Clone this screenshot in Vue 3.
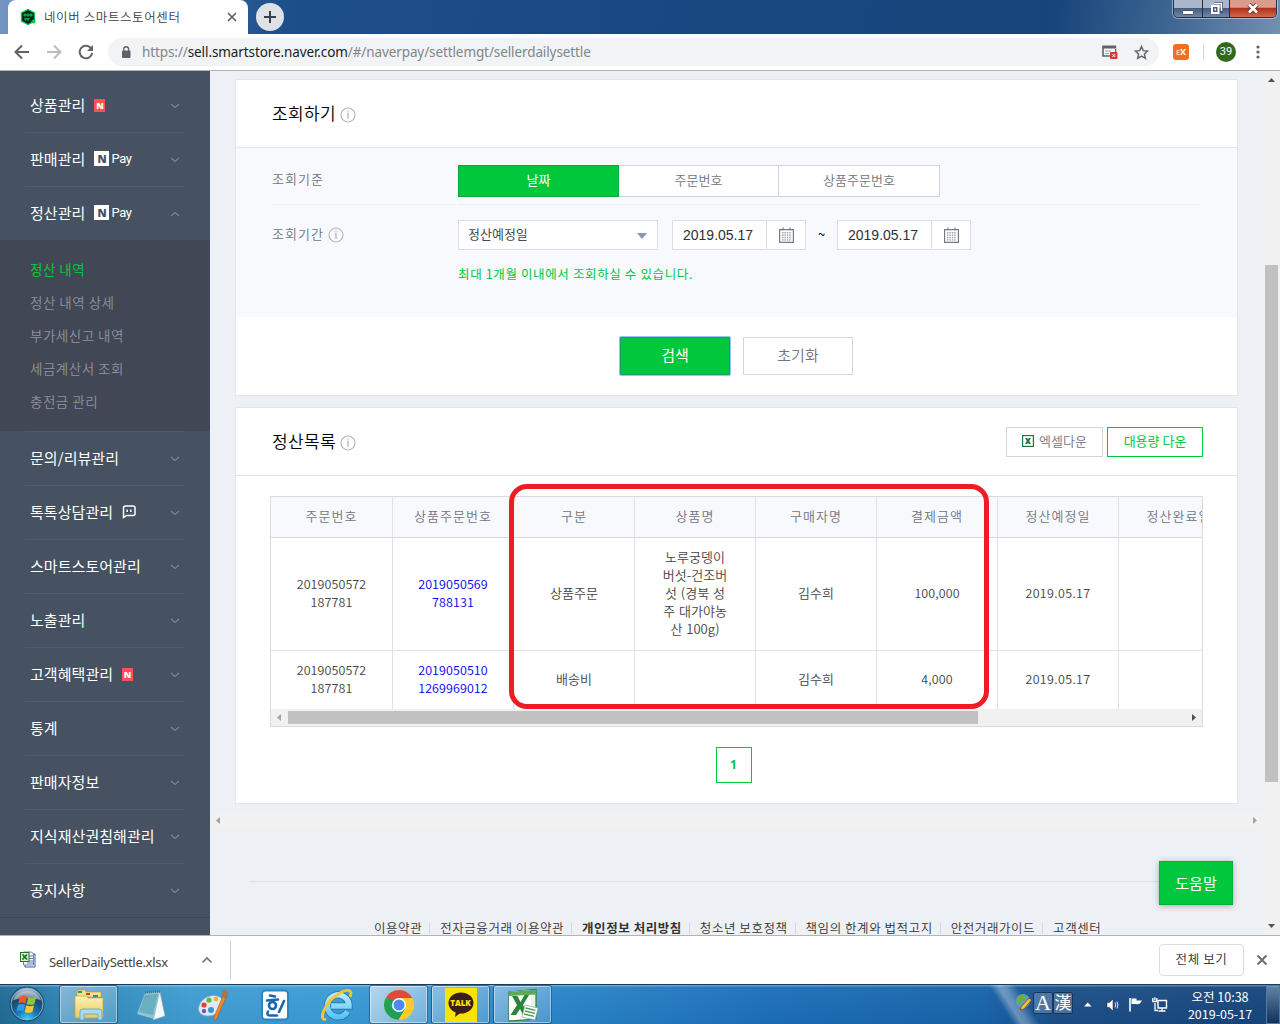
<script setup>
const menuTop = [
  { label: '상품관리', badge: 'new' },
  { label: '판매관리', badge: 'pay' },
  { label: '정산관리', badge: 'pay', open: true },
]
const subMenu = ['정산 내역', '정산 내역 상세', '부가세신고 내역', '세금계산서 조회', '충전금 관리']
const menuBottom = [
  { label: '문의/리뷰관리' },
  { label: '톡톡상담관리', badge: 'talk' },
  { label: '스마트스토어관리' },
  { label: '노출관리' },
  { label: '고객혜택관리', badge: 'new' },
  { label: '통계' },
  { label: '판매자정보' },
  { label: '지식재산권침해관리' },
  { label: '공지사항' },
]
const groups = [
  { id: 'top', items: menuTop },
  { id: 'bottom', items: menuBottom },
]
const columns = ['주문번호', '상품주문번호', '구분', '상품명', '구매자명', '결제금액', '정산예정일', '정산완료일']
const rows = [
  [['2019050572', '187781'], ['2019050569', '788131'], ['상품주문'], ['노루궁뎅이', '버섯-건조버', '섯 (경북 성', '주 대가야농', '산 100g)'], ['김수희'], ['100,000'], ['2019.05.17'], []],
  [['2019050572', '187781'], ['2019050510', '1269969012'], ['배송비'], [], ['김수희'], ['4,000'], ['2019.05.17'], []],
]
const footerLinks = ['이용약관', '전자금융거래 이용약관', '개인정보 처리방침', '청소년 보호정책', '책임의 한계와 법적고지', '안전거래가이드', '고객센터']
const dots = [0, 1, 2, 3, 4, 5, 6, 7, 8, 9, 10, 11, 12, 13, 14, 15]
</script>

<template>
  <div class="screen">
    <header class="tabstrip">
      <div class="tab">
        <svg class="favicon" width="16" height="16" viewBox="0 0 16 16">
          <path d="M8 .5 14.500 4v8L8 15.500 1.500 12V4z" fill="#0b1f26" stroke="#06c540" stroke-width="1.300" />
          <path d="M4 5h2v2H4zM7 5h2v2H7zM10 5h2v2h-2zM4.500 9l1 2.500L7 9l1 2.500L9.500 9" fill="#0aa63c" stroke="#0aa63c" />
          <circle cx="13.500" cy="12.500" r="2" fill="#06c540" />
        </svg>
        <span class="tab-title">네이버 스마트스토어센터</span>
        <svg class="tab-x" width="10" height="10" viewBox="0 0 10 10"><path d="M1 1l8 8M9 1l-8 8" stroke="#5f6368" stroke-width="1.700" /></svg>
      </div>
      <div class="newtab">
        <svg width="14" height="14" viewBox="0 0 14 14"><path d="M7 1v12M1 7h12" stroke="#3c4043" stroke-width="2" /></svg>
      </div>
      <div class="winbtns">
        <div class="wb"><svg width="12" height="14" viewBox="0 0 12 14"><rect x=".5" y="8.500" width="11" height="4" rx="1" fill="#fff" stroke="#46536a" /></svg></div>
        <div class="wb mid"><svg width="13" height="13" viewBox="0 0 13 13"><path d="M4 1h8v8H9.500" fill="none" stroke="#3a4860" stroke-width="3" /><path d="M4 1.500h7.500V9" fill="none" stroke="#fff" stroke-width="1.500" /><rect x="2" y="4" width="6.500" height="7" fill="#4c5d7a" stroke="#fff" stroke-width="2" /><rect x="4.500" y="6.500" width="1.500" height="2" fill="#fff" /></svg></div>
        <div class="wb close"><svg width="12" height="11" viewBox="0 0 12 11"><path d="M2 1.500l8 8M10 1.500l-8 8" stroke="#5a3030" stroke-width="4.500" /><path d="M2 1.500l8 8M10 1.500l-8 8" stroke="#fff" stroke-width="2.800" /></svg></div>
      </div>
    </header>

    <div class="toolbar">
      <svg class="nav" width="16" height="16" viewBox="0 0 16 16"><path d="M15 8H2M8 1.500 1.500 8 8 14.500" fill="none" stroke="#5f6368" stroke-width="2" /></svg>
      <svg class="nav" width="16" height="16" viewBox="0 0 16 16"><path d="M1 8h13M8 1.500 14.500 8 8 14.500" fill="none" stroke="#bbbdc0" stroke-width="2" /></svg>
      <svg class="nav" width="16" height="16" viewBox="0 0 16 16"><path d="M13.300 4.600A6.300 6.300 0 1 0 14.200 9" fill="none" stroke="#5f6368" stroke-width="2" /><path d="M15 1v6H9z" fill="#5f6368" /></svg>
      <div class="omnibox">
        <svg width="10" height="13" viewBox="0 0 10 13"><rect x="1" y="4.500" width="8.500" height="7.500" rx="1" fill="#5f6368" /><path d="M2.700 5V3.200a2.400 2.400 0 0 1 4.900 0V5" fill="none" stroke="#5f6368" stroke-width="1.300" /></svg>
        <span class="url">https://<b>sell.smartstore.naver.com</b>/#/naverpay/settlemgt/sellerdailysettle</span>
        <svg class="popup" width="16" height="14" viewBox="0 0 16 14"><path d="M1 2.500V11h7" fill="none" stroke="#5f6368" stroke-width="1.600" /><path d="M.2.500h14v3H.2zM13 3v4h1.200V3z" fill="#5f6368" /><path d="M3 6h6M3 8.500h4" stroke="#aaa" /><rect x="8" y="7" width="7.500" height="7" rx="1" fill="#d93a30" /><path d="M10.300 9l3 3M13.300 9l-3 3" stroke="#fff" /></svg>
        <svg class="star" width="15" height="15" viewBox="0 0 15 15"><path d="M7.500 1.500l1.800 4.100 4.400.4-3.300 3 1 4.400-3.900-2.300-3.900 2.300 1-4.400-3.300-3 4.400-.4z" fill="none" stroke="#5f6368" stroke-width="1.400" /></svg>
      </div>
      <div class="ext"><i>E</i>X</div>
      <div class="tsep"></div>
      <div class="avatar">39</div>
      <svg class="kebab" width="4" height="14" viewBox="0 0 4 14"><circle cx="2" cy="2" r="1.600" fill="#5f6368" /><circle cx="2" cy="7" r="1.600" fill="#5f6368" /><circle cx="2" cy="12" r="1.600" fill="#5f6368" /></svg>
    </div>

    <div class="page">
      <nav class="sidebar">
        <template v-for="g in groups" :key="g.id">
          <div v-for="m in g.items" :key="m.label" class="mitem" :class="{ open: m.open }">
            <span class="mlabel">{{ m.label }}</span>
            <span v-if="m.badge === 'new'" class="bnew">N</span>
            <span v-if="m.badge === 'pay'" class="bpay"><em>N</em>Pay</span>
            <svg v-if="m.badge === 'talk'" class="btalk" width="14" height="14" viewBox="0 0 14 14"><path d="M1.500 12.500V3q0-2 2-2H11q2 0 2 2v5.500q0 2-2 2H4.500z" fill="none" stroke="#fff" stroke-width="1.500" /><path d="M5.200 4.500V7M8.800 4.500V7" stroke="#fff" stroke-width="1.500" /></svg>
            <svg class="chev" width="10" height="6" viewBox="0 0 10 6"><path :d="m.open ? 'M1 5l4-3.500L9 5' : 'M1 1l4 3.500L9 1'" fill="none" stroke="#7c8591" stroke-width="1.200" /></svg>
          </div>
          <div v-if="g.id === 'top'" class="submenu">
            <div v-for="(s, i) in subMenu" :key="s" class="sub" :class="{ on: i === 0 }">{{ s }}</div>
          </div>
        </template>
      </nav>

      <main class="main">
        <section class="card search-card">
          <div class="chead">
            <h2>조회하기</h2>
            <svg class="info" width="16" height="16" viewBox="0 0 16 16"><circle cx="8" cy="8" r="7" fill="none" stroke="#b4b7be" stroke-width="1.200" /><path d="M8 3.800v1.600M7 7h1v5" fill="none" stroke="#b4b7be" stroke-width="1.300" /></svg>
          </div>
          <div class="form">
            <div class="frow first">
              <div class="flabel">조회기준</div>
              <div class="fval">
                <div class="seg">
                  <span class="s on">날짜</span><span class="s">주문번호</span><span class="s last">상품주문번호</span>
                </div>
              </div>
            </div>
            <div class="frow">
              <div class="flabel"><span>조회기간</span>
                <svg class="info" width="16" height="16" viewBox="0 0 16 16"><circle cx="8" cy="8" r="7" fill="none" stroke="#b4b7be" stroke-width="1.200" /><path d="M8 3.800v1.600M7 7h1v5" fill="none" stroke="#b4b7be" stroke-width="1.300" /></svg>
              </div>
              <div class="fval">
                <div class="controls">
                  <div class="select">정산예정일<svg width="10" height="6" viewBox="0 0 10 6"><path d="M0 0h10L5 6z" fill="#8b97ac" /></svg></div>
                  <template v-for="n in 2" :key="n">
                    <div class="date">
                      <span>2019.05.17</span>
                      <div class="calbox">
                        <svg width="15" height="16" viewBox="0 0 15 16"><path d="M.6 2.600h13.800v12.800H.6zM4 .5v3M11 .5v3M7.500 2v1" fill="none" stroke="#757c85" stroke-width="1.200" /><rect v-for="d in dots" :key="d" :x="3 + (d % 4) * 2.400" :y="5 + Math.floor(d / 4) * 2.400" width="1.500" height="1.500" fill="#a4a8af" /></svg>
                      </div>
                    </div>
                    <span v-if="n === 1" class="tilde">~</span>
                  </template>
                </div>
                <p class="hint">최대 1개월 이내에서 조회하실 수 있습니다.</p>
              </div>
            </div>
          </div>
          <div class="actions">
            <div class="btn go">검색</div>
            <div class="btn">초기화</div>
          </div>
        </section>

        <section class="card list-card">
          <div class="chead">
            <h2>정산목록</h2>
            <svg class="info" width="16" height="16" viewBox="0 0 16 16"><circle cx="8" cy="8" r="7" fill="none" stroke="#b4b7be" stroke-width="1.200" /><path d="M8 3.800v1.600M7 7h1v5" fill="none" stroke="#b4b7be" stroke-width="1.300" /></svg>
            <div class="dl">
              <svg width="12" height="12" viewBox="0 0 12 12"><rect x=".6" y=".6" width="10.800" height="10.800" fill="#fff" stroke="#1d7a45" stroke-width="1.200" /><path d="M3 3h2.200L6 4.500 6.800 3H9L7.200 6 9 9H6.800L6 7.500 5.200 9H3l1.800-3z" fill="#1d7a45" /></svg>
              엑셀다운
            </div>
            <div class="dl green">대용량 다운</div>
          </div>
          <div class="tbl">
            <div class="tr th">
              <div v-for="c in columns" :key="c" class="td">{{ c }}</div>
            </div>
            <div v-for="(r, ri) in rows" :key="ri" class="tr" :class="'r' + ri">
              <div v-for="(c, ci) in r" :key="ci" class="td" :class="{ link: ci === 1, num: ci < 2 || ci === 5, day: ci === 6 }">
                <div v-for="l in c" :key="l">{{ l }}</div>
              </div>
            </div>
            <div class="hs">
              <svg width="17" height="17" viewBox="0 0 17 17"><path d="M10 5v7L6 8.500z" fill="#a3a3a3" /></svg>
              <div class="hthumb"></div>
              <svg class="end" width="17" height="17" viewBox="0 0 17 17"><path d="M7 5v7l4-3.500z" fill="#505050" /></svg>
            </div>
          </div>
          <div class="pager"><span>1</span></div>
        </section>

        <div class="mainhs">
          <svg width="17" height="17" viewBox="0 0 17 17"><path d="M10 5v7L6 8.500z" fill="#a3a3a3" /></svg>
          <svg width="17" height="17" viewBox="0 0 17 17"><path d="M7 5v7l4-3.500z" fill="#a3a3a3" /></svg>
        </div>
        <footer class="foot">
          <a v-for="(f, i) in footerLinks" :key="f" :class="{ bold: i === 2 }">{{ f }}</a>
        </footer>
        <div class="marker"></div>
        <div class="help">도움말</div>
      </main>

      <div class="vs">
        <svg width="17" height="17" viewBox="0 0 17 17"><path d="M5 11h7L8.500 7z" fill="#505050" /></svg>
        <div class="vthumb"></div>
        <svg class="down" width="17" height="17" viewBox="0 0 17 17"><path d="M5 6h7l-3.500 4z" fill="#505050" /></svg>
      </div>
    </div>

    <div class="shelf">
      <svg class="xl" width="17" height="18" viewBox="0 0 17 18">
        <path d="M5 3h10v13H5z" fill="#fff" stroke="#3c5aa0" /><path d="M3.500 1h8l2 2v11h-10z" fill="#f4f7fd" stroke="#6c86ba" />
        <path d="M9 5h4M9 7.500h4M7 10h6M7 12h6" stroke="#5e7dbb" /><rect x=".5" y="1.500" width="8.500" height="9" fill="#d8f0d0" stroke="#237a2b" /><path d="M2.500 3.500l4.500 5M7 3.500l-4.500 5" stroke="#14771f" stroke-width="1.700" />
      </svg>
      <span class="fname">SellerDailySettle.xlsx</span>
      <svg class="up" width="12" height="8" viewBox="0 0 12 8"><path d="M1.500 6.500 6 2l4.500 4.500" fill="none" stroke="#777" stroke-width="1.700" /></svg>
      <div class="ssep"></div>
      <div class="showall">전체 보기</div>
      <svg class="sx" width="12" height="12" viewBox="0 0 12 12"><path d="M1.500 1.500l9 9M10.500 1.500l-9 9" stroke="#6a6e73" stroke-width="2" /></svg>
    </div>

    <div class="taskbar">
      <svg class="start" width="36" height="38" viewBox="0 0 36 38">
        <defs>
          <radialGradient id="orb" cx=".5" cy="1" r=".95"><stop offset="0" stop-color="#3fe0ff" /><stop offset=".35" stop-color="#1a76b4" /><stop offset=".75" stop-color="#1d4669" /><stop offset="1" stop-color="#a9bccb" /></radialGradient>
          <linearGradient id="fold" x1="0" y1="0" x2="0" y2="1"><stop offset="0" stop-color="#fdf3b8" /><stop offset="1" stop-color="#ecc95d" /></linearGradient>
          <linearGradient id="ieb" gradientUnits="userSpaceOnUse" x1="0" y1="4" x2="0" y2="32"><stop offset="0" stop-color="#c4f1ff" /><stop offset="1" stop-color="#4fc0f4" /></linearGradient>
        </defs>
        <circle cx="18" cy="19" r="17.500" fill="#123c5c" opacity=".7" />
        <circle cx="18" cy="19" r="16" fill="url(#orb)" stroke="#7fb4d3" />
        <path d="M4 15a15 14 0 0 1 28 0q-14-4-28 0z" fill="#fff" opacity=".4" />
        <path d="M11 11.500q4-2 7 0l-1.600 7q-3.500-1.800-7 0z" fill="#ee5a24" /><path d="M19.200 12q4 2 8 0l-1.800 7q-4 1.700-7.800 0z" fill="#8cc63f" />
        <path d="M9 19.800q4-1.800 7 0l-1.600 6.700q-3.500-1.800-7 0z" fill="#2e9be6" /><path d="M17.200 20.300q4 1.900 7.800 0L23.400 27q-4 1.700-7.800 0z" fill="#fdc82f" />
      </svg>
      <div class="tb active explorer">
        <svg width="34" height="32" viewBox="0 0 34 32"><path d="M5 3q0-2 2-2h6l1 2h15v5H5z" fill="#f7e38c" stroke="#b99a3d" stroke-width=".6" /><path d="M6 2h4v2H6z" fill="#20a040" /><path d="M14 4h4v2h-4z" fill="#d33" /><path d="M21 6h5v2h-5z" fill="#28c" /><path d="M3 7h11l2 2h15v19q0 1-1 1H4q-1 0-1-1z" fill="url(#fold)" stroke="#c4a148" stroke-width=".7" /><path d="M8 31V23q0-3 3-3h16q3 0 3 3v8h-4v-6H12v6z" fill="#a9dcf2" stroke="#619fbe" stroke-width=".8" /></svg>
      </div>
      <div class="tb"><svg width="32" height="32" viewBox="0 0 32 32"><path d="M22 4l3-1 5 24-12 4z" fill="#f3f7f8" stroke="#8fa7ad" stroke-width=".6" /><path d="M10 4l15-1-6 27L2 25z" fill="#8ec6d4" /><path d="M10 6l13-1-5 21-14-3z" fill="#4597ab" opacity=".5" /><path d="M10 3.500l15.500-1" stroke="#587078" stroke-width="2.400" stroke-dasharray="1 1" /></svg></div>
      <div class="tb"><svg width="34" height="32" viewBox="0 0 34 32"><path d="M3 17C6 7 20 3 26 10c2 4-4 5-3 9 1 5-5 8-11 8C5 27 1 23 3 17z" fill="#dcebf7" stroke="#7fa3c4" stroke-width=".8" /><circle cx="8" cy="16" r="2.600" fill="#e0452f" /><circle cx="13" cy="11" r="2.600" fill="#6ab43c" /><circle cx="20" cy="10" r="2.400" fill="#f2b22c" /><circle cx="8" cy="22" r="2.200" fill="#8253b2" /><circle cx="15" cy="21" r="3" fill="#3895cf" /><path d="M27 7l3 2-10 22q-3 1-2-3z" fill="#ee8a2f" stroke="#a9561c" stroke-width=".6" /><path d="M26 6q0-6 4-5 3 1 2 7l-3 2z" fill="#a8744a" /></svg></div>
      <div class="tb"><svg width="32" height="32" viewBox="0 0 32 32"><rect x="3" y="1.500" width="26" height="29" rx="3.500" fill="#fff" stroke="#2d84cb" stroke-width="2" /><path d="M11 6.500l5 1M8 11.500l11-1" stroke="#1766b3" stroke-width="2.600" stroke-linecap="round" /><circle cx="13.500" cy="16.500" r="3.500" fill="none" stroke="#1766b3" stroke-width="2.600" /><path d="M9 22.500q-2 4 2 4h7M25 12l-5 11" stroke="#1766b3" stroke-width="2.600" stroke-linecap="round" fill="none" /></svg></div>
      <div class="tb"><svg width="34" height="34" viewBox="0 0 34 34"><path d="M27.500 23.500A10.800 11 0 1 1 29 18H11" fill="none" stroke="#1c6fae" stroke-width="7" /><path d="M27.500 23.500A10.800 11 0 1 1 29 18H11" fill="none" stroke="url(#ieb)" stroke-width="5.500" /><path d="M6 31C-2 34 4 15 17 7 25 1 34 0 30 9" fill="none" stroke="#f4c72c" stroke-width="2.800" /></svg></div>
      <div class="tb active"><svg width="32" height="32" viewBox="0 0 32 32"><circle cx="16" cy="16" r="15" fill="#fccb2e" /><path d="M16 16 3 8.500A15 15 0 0 1 29 8.500L29 9H16z" fill="#dd4b3e" /><path d="M3 8.500A15 15 0 0 0 15.500 31L22.500 19.500 16 16 9.700 19.500z" fill="#1fa05a" /><path d="M3 8.500 9.700 19.500 12 12z" fill="#1fa05a" /><path d="M16 9h13.200a15 15 0 0 1-13.700 22L22.500 19.500z" fill="#fccb2e" /><circle cx="16" cy="16" r="7" fill="#fff" /><circle cx="16" cy="16" r="5.500" fill="#4a8af4" /></svg></div>
      <div class="tb run"><div class="talk"><svg width="26" height="27" viewBox="0 0 26 27"><ellipse cx="13" cy="12" rx="12.500" ry="10.500" fill="#3a1d1d" /><path d="M8 20l-1 6 6-4.500z" fill="#3a1d1d" /></svg><span>TALK</span></div></div>
      <div class="tb run"><svg width="32" height="34" viewBox="0 0 32 34"><path d="M2 4 29 1.500V31L2 33z" fill="#e9f4e6" stroke="#2d7d38" stroke-width="1.200" /><path d="M2 4 24 2v28L2 32z" fill="#fff" /><path d="M2 4l27-2.500v5L2 8z" fill="#5daa55" /><path d="M5 8h5.500l3 6 4-7h4.500l-6 10 6 10h-6l-3-6-4 6H3.500L10 17z" fill="#28853a" /><path d="M18 17l13 3-3 12-13-3z" fill="#fff" stroke="#86aa80" stroke-width=".7" /><path d="M18.500 20l10 2.300M18 23l10 2.300M17 26l10 2.300" stroke="#4c9a51" stroke-width="1.300" /></svg></div>
      <div class="tray">
        <svg class="globe" width="17" height="18" viewBox="0 0 17 18"><circle cx="8" cy="8" r="7" fill="#5c9fc4" /><path d="M2 5q4-5 7-3l2 3-4 4-5 1zM10 9l4-3v5l-4 3z" fill="#6fae3c" /><path d="M6 14 14 5l2.500 2L9 16l-3.500 1z" fill="#f0c23c" stroke="#7a4a1c" stroke-width=".8" /></svg>
        <span class="ime a">A</span><span class="ime">漢</span>
        <svg class="t1" width="8" height="5" viewBox="0 0 8 5"><path d="M0 4.500h7.500L3.800.5z" fill="#fff" /></svg>
        <svg class="t2" width="13" height="14" viewBox="0 0 13 14"><path d="M1 4.500h2.500L7 1v12L3.500 9.500H1z" fill="#fff" stroke="#223" stroke-width=".5" /><path d="M9 4.500q1.500 2.500 0 5M11 3.500q2 3.500 0 7" fill="none" stroke="#dfe8f2" /></svg>
        <svg class="t3" width="16" height="15" viewBox="0 0 16 15"><path d="M2 1v13.500" stroke="#fff" stroke-width="1.600" /><path d="M3.500 1.500h5v2h5.500l-2 3-3.500 1v-.5h-5z" fill="#fff" /></svg>
        <svg class="t4" width="16" height="15" viewBox="0 0 16 15"><path d="M6 3.500h8.500v7.500H6z" fill="#1d4a80" stroke="#fff" stroke-width="1.400" /><path d="M10 11v2.500M6.500 14h7M3 6v7.500h3" stroke="#fff" stroke-width="1.300" fill="none" /><path d="M.8 1v3.500h4V1M2.800.2v3" stroke="#fff" stroke-width="1.300" fill="none" /></svg>
        <div class="clock"><div>오전 10:38</div><div>2019-05-17</div></div>
        <div class="peek"></div>
      </div>
    </div>
  </div>
</template>

<style>
body { margin: 0; overflow: hidden; }
</style>

<style scoped>
* { box-sizing: border-box; }
svg { flex: none; display: block; }
.screen { width: 1280px; height: 1024px; display: flex; flex-direction: column; overflow: hidden; font-family: "Noto Sans CJK KR", "Noto Sans", sans-serif; font-size: 13px; background: #fff; }

.tabstrip { height: 34px; flex: none; display: flex; align-items: flex-start; padding-left: 8px; background: linear-gradient(100deg, #7596c2 0, #1d4f8b 22%, #194882 50%, #17447a 82%, #3d6591 91%, #7390b0 100%); }
.tab { width: 240px; height: 34px; background: #fff; border-radius: 8px 8px 0 0; display: flex; align-items: center; padding: 0 11px 0 12px; }
.tab-title { margin-left: 8px; padding-bottom: 2px; font-size: 12.500px; letter-spacing: .6px; color: #3c4043; font-weight: 350; flex: 1; white-space: nowrap; }
.newtab { width: 28px; height: 28px; margin: 3px 0 0 8px; border-radius: 50%; background: #dee1e6; display: flex; align-items: center; justify-content: center; }
.winbtns { margin-left: auto; margin-right: 3px; display: flex; width: 104px; height: 18px; border: 1px solid #20314a; border-top: 0; border-radius: 0 0 5px 5px; overflow: hidden; box-shadow: 0 0 0 1px rgba(255,255,255,.45); }
.wb { width: 29px; display: flex; align-items: center; justify-content: center; background: linear-gradient(#a9b7c9 0 45%, #465e80 50%, #6f88a8); border-right: 1px solid #20314a; }
.wb.mid { width: 27px; }
.wb.close { flex: 1; border: 0; background: linear-gradient(#d99c8d 0 42%, #b5301b 50%, #d06a4b); }

.toolbar { height: 37px; flex: none; display: flex; align-items: center; padding: 0 20px 0 14px; border-bottom: 1px solid #b3b3b5; background: #fff; }
.nav { margin-right: 16px; }
.omnibox { width: 1051px; height: 28px; margin-left: -2px; border-radius: 14px; background: #f1f3f4; display: flex; align-items: center; padding: 0 10px 0 13px; }
.url { margin-left: 11px; flex: 1; font-family: "Noto Sans", "Open Sans", sans-serif; font-size: 13.500px; line-height: 20px; color: #80868b; letter-spacing: -.1px; white-space: nowrap; }
.url b { font-weight: 400; color: #202124; }
.popup { margin-right: 16px; }
.ext { width: 16px; height: 16px; margin-left: 14px; border-radius: 3px; background: #f26f21; color: #fff; font: bold 9px/16px "Open Sans", sans-serif; text-align: center; }
.ext i { font-style: normal; font-size: 7px; opacity: .7; }
.tsep { width: 1px; height: 16px; background: #d0d2d5; margin: 0 12px 0 14px; }
.avatar { width: 20px; height: 20px; border-radius: 50%; background: #33691e; color: #fff; font: 11px/20px Roboto, sans-serif; text-align: center; }
.kebab { margin-left: auto; }

.page { height: 864px; flex: none; display: flex; background: #edf0f5; overflow: hidden; }
.sidebar { width: 210px; flex: none; background: #465161; padding-top: 8px; display: flex; flex-direction: column; }
.mitem { height: 54px; flex: none; margin: 0 25px; padding: 0 5px; border-bottom: 1px solid #515c6d; display: flex; align-items: center; color: #fff; }
.mitem:last-child { margin: 0; padding: 0 30px; border-color: #3d4756; }
.mitem.open { border: 0; height: 53px; }
.mlabel { font-size: 15px; line-height: 20px; padding-bottom: 2px; letter-spacing: .05px; white-space: nowrap; }
.bnew { width: 11px; height: 13px; margin-left: 9px; background: #ff5058; color: #fff; font: 800 9px/13px "Open Sans", sans-serif; text-align: center; }
.bpay { display: flex; align-items: center; margin-left: 9px; padding-bottom: 2px; font: 13px/15px Roboto, sans-serif; letter-spacing: -.35px; }
.bpay em { width: 15px; height: 15px; margin-right: 2px; background: #fff; color: #465161; font: 900 11px/15px "Open Sans", sans-serif; text-align: center; }
.btalk { margin-left: 9px; margin-bottom: 2px; }
.chev { margin-left: auto; }
.submenu { height: 191px; flex: none; background: #424755; padding-top: 13px; }
.submenu + .mitem { height: 55px; border-top: 1px solid #515c6d; }
.sub { height: 33px; padding-left: 30px; line-height: 32px; font-size: 13.500px; letter-spacing: .5px; color: #8d949e; font-weight: 350; white-space: nowrap; }
.sub.on { color: #00c73c; font-weight: 400; }

.main { position: relative; width: 1053px; flex: none; padding: 8px 0 0 25px; display: flex; flex-direction: column; }
.card { width: 1003px; flex: none; background: #fff; border: 1px solid #e3e5ec; }
.chead { height: 68px; display: flex; align-items: center; padding: 0 34px 0 36px; border-bottom: 1px solid #e3e5ec; }
h2 { margin: 0; padding-bottom: 2px; font-size: 17px; line-height: 24px; font-weight: 350; letter-spacing: .36px; color: #000; }
.chead .info { margin: 3px 0 0 4px; }
.search-card { height: 317px; }
.form { height: 169px; background: #f8f9fd; padding: 17px 36px 0; }
.frow { display: flex; gap: 2px; }
.flabel { width: 184px; height: 30px; display: flex; align-items: center; font-weight: 350; letter-spacing: 1px; color: #70757f; }
.flabel span { padding-bottom: 3px; }
.flabel .info { margin: -1px 0 0 4px; }
.fval { flex: 1; }
.first > div { height: 40px; border-bottom: 1px solid #eceef3; }
.first .flabel { padding-bottom: 12px; }
.frow + .frow { padding-top: 15px; }
.seg { width: 482px; height: 32px; display: flex; }
.s { width: 160px; border: 1px solid #d2d4dc; border-width: 1px 1px 1px 0; background: #fff; text-align: center; line-height: 27px; color: #70757f; font-weight: 350; }
.s.on { width: 161px; border: 1px solid #06a937; background: #00c73c; color: #fff; font-weight: 400; }
.s.last { width: 161px; }
.controls { display: flex; align-items: center; }
.select { width: 200px; height: 30px; border: 1px solid #dbdde2; background: #fff; display: flex; align-items: center; justify-content: space-between; padding: 0 10px 0 9px; margin-right: 14px; color: #444952; line-height: 24px; padding-bottom: 2px; }
.select svg { margin-top: 3px; }
.date { width: 134px; height: 30px; border: 1px solid #dbdde2; background: #fff; display: flex; font: 14px/29px "Liberation Sans", Arial, sans-serif; color: #303038; }
.date > span { width: 93px; padding-left: 10px; }
.calbox { flex: 1; border-left: 1px solid #dbdde2; display: flex; align-items: center; justify-content: center; }
.tilde { width: 31px; text-align: center; line-height: 26px; padding-bottom: 3px; color: #000; }
.hint { margin: 15px 0 0; line-height: 18px; font-size: 12.500px; color: #00c73c; letter-spacing: .63px; white-space: nowrap; }
.actions { display: flex; justify-content: center; gap: 13px; padding-top: 20px; }
.btn { width: 110px; height: 38px; border: 1px solid #d2d4dc; background: #fff; color: #70757f; font-size: 15px; line-height: 34px; text-align: center; font-weight: 350; }
.btn.go { border-color: #159f6c; background: #00c73c; color: #fff; box-shadow: 0 0 0 1px #9cc0f4; border-radius: 1px; font-weight: 400; }

.list-card { height: 397px; margin-top: 11px; }
.dl { width: 97px; height: 30px; border: 1px solid #d2d4dc; display: flex; align-items: center; justify-content: center; gap: 5px; color: #70757f; font-weight: 350; line-height: 26px; padding-bottom: 2px; }
.dl svg { margin-top: 1px; }
.info + .dl { margin-left: auto; margin-right: 4px; }
.dl.green { width: 96px; border-color: #00c73c; color: #00c73c; font-weight: 400; }
.tbl { width: 933px; height: 231px; margin: 20px 0 0 34px; border: 1px solid #d9dbe2; overflow: hidden; display: flex; flex-direction: column; }
.tr { display: flex; flex: none; width: 970px; border-bottom: 1px solid #e1e3e9; line-height: 18px; color: #444; }
.td { width: 121px; flex: none; border-right: 1px solid #dfe1e7; padding-bottom: 2px; display: flex; flex-direction: column; align-items: center; justify-content: center; white-space: nowrap; font-weight: 350; word-spacing: 1px; }
.td:first-child { width: 122px; }
.th { height: 41px; background: #f8f9fd; color: #70757f; letter-spacing: 1px; border-color: #d9dbe2; }
.r0 { height: 113px; }
.r1 { height: 58px; border: 0; }
.num { font-size: 12.500px; letter-spacing: .1px; }
.day { font-size: 12.500px; letter-spacing: .35px; }
.link { color: #00e; }
.hs { height: 17px; background: #f1f1f1; display: flex; align-items: center; }
.hthumb { width: 690px; height: 13px; background: #c1c1c1; }
.end { margin-left: auto; }
.pager { display: flex; justify-content: center; padding-top: 20px; }
.pager span { width: 36px; height: 36px; margin-right: 6px; border: 1px solid #00c73c; color: #00c73c; font: bold 12px/34px "Open Sans", sans-serif; text-align: center; }

.mainhs { height: 17px; flex: none; margin: 8px 0 0 -25px; background: #f1f1f1; display: flex; justify-content: space-between; }
.foot { margin: 52px 29px 0 14px; flex: none; border-top: 1px solid #dcdfe3; padding: 37px 0 0 125px; height: 60px; display: flex; }
.foot a { font-size: 12.500px; line-height: 18px; letter-spacing: .55px; color: #333; font-weight: 350; white-space: nowrap; padding-right: 8px; }
.foot a + a { padding-left: 10px; }
.foot a:not(:last-child) { background: linear-gradient(#d5d8dd, #d5d8dd) right 4px / 1px 11px no-repeat; }
.foot .bold { font-weight: 700; }
.marker { position: absolute; left: 299px; top: 413px; width: 480px; height: 225px; border: 5px solid #ee1c24; border-radius: 18px; }
.help { position: absolute; left: 949px; top: 790px; width: 74px; height: 44px; background: #00c73c; border: 1px solid #06b038; box-shadow: 0 1px 6px rgba(0,0,0,.3); color: #fff; font-size: 15px; line-height: 41px; text-align: center; }

.vs { width: 17px; background: #f1f1f1; display: flex; flex-direction: column; }
.vthumb { height: 517px; width: 13px; margin: 177px 0 0 2px; background: #c1c1c1; }
.down { margin-top: auto; }

.shelf { height: 49px; flex: none; border-top: 1px solid #b3b3b5; background: #fff; display: flex; align-items: center; padding: 0 12px 0 20px; }
.fname { width: 152px; margin-left: 12px; padding-top: 4px; font-family: "Noto Sans", sans-serif; font-size: 13px; letter-spacing: -.3px; color: #444; white-space: nowrap; }
.ssep { width: 1px; height: 38px; margin-left: 17px; background: #ccc; }
.showall { width: 85px; height: 32px; margin-left: auto; margin-right: 12px; border: 1px solid #dadce0; border-radius: 4px; text-align: center; line-height: 27px; font-size: 12.500px; letter-spacing: .6px; color: #3c4043; }

.taskbar { height: 40px; flex: none; display: flex; align-items: stretch; border-top: 1px solid #1a3c5c; background: linear-gradient(rgba(255,255,255,.3) 0 1px, rgba(255,255,255,.04) 2px, rgba(0,0,0,.03)), linear-gradient(58deg, transparent 859px, rgba(255,255,255,.35) 867px, rgba(255,255,255,.3) 872px, transparent 882px), linear-gradient(90deg, #216a93 0, #2c84b5 60px, #3f9dd0 190px, #3b9cd6 330px, #2a86ca 550px, #1c6fb9 760px, #1764ab 980px, #1b4f88 1060px, #17457b 1280px); }
.start { margin: 0 14px 0 9px; }
.tb { width: 60px; margin-right: 2px; display: flex; align-items: center; justify-content: center; }
.tb.active, .tb.run { height: 39px; width: 59px; margin-right: 3px; border: 1px solid rgba(20,50,80,.65); border-radius: 3px; box-shadow: inset 0 0 0 1px rgba(255,255,255,.45); background: linear-gradient(135deg, rgba(255,255,255,.6), rgba(255,255,255,.3)); }
.tb.explorer, .tb.run { background: linear-gradient(135deg, rgba(255,255,255,.4), rgba(255,255,255,.15)); }
.talk { position: relative; width: 32px; height: 34px; background: #fbe300; display: flex; align-items: center; justify-content: center; }
.talk span { position: absolute; left: 0; right: 0; top: 9px; font: 900 8px/12px "Open Sans", sans-serif; text-align: center; color: #fbe300; }
.tray { margin-left: auto; display: flex; align-items: center; color: #fff; }
.ime { width: 20px; height: 22px; margin-top: -3px; border: 1px solid #163657; border-radius: 2px; background: rgba(255,255,255,.2); font: 17px/18px "Noto Sans CJK KR", sans-serif; text-align: center; display: flex; justify-content: center; }
.ime.a { font-family: "Liberation Serif", serif; font-size: 22px; line-height: 20px; }
.globe { margin: -5px 1px 0 0; }
.t1 { margin: 0 14px 0 11px; }
.t2 { margin-right: 9px; }
.t3 { margin-right: 8px; }
.clock { width: 84px; margin: 0 4px 0 10px; font-size: 12.500px; line-height: 17px; text-align: center; white-space: nowrap; }
.peek { width: 14px; height: 39px; border: 1px solid #4f7aa5; background: linear-gradient(rgba(255,255,255,.3), rgba(0,0,0,.25)); }
</style>
